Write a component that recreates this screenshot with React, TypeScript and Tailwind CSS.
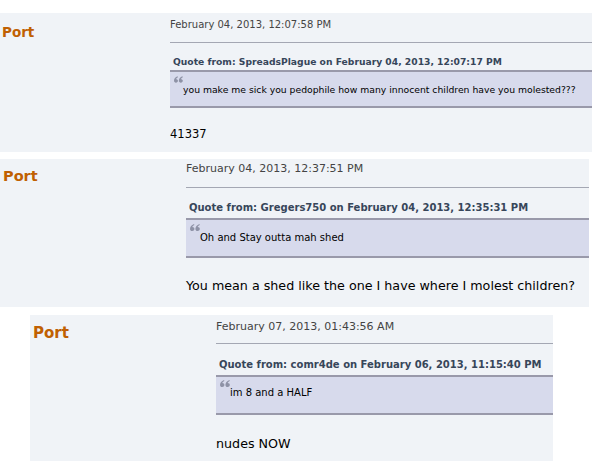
type PostClasses = {
  wrap: string;
  side: string;
  name: string;
  head: string;
  qhead: string;
  qbox: string;
  qicon: string;
  qtext: string;
  body: string;
};

type Post = {
  date: string;
  quoteAuthor: string;
  quoteDate: string;
  quote: string;
  body: string;
  c: PostClasses;
};

const posts: Post[] = [
  {
    date: 'February 04, 2013, 12:07:58 PM',
    quoteAuthor: 'SpreadsPlague',
    quoteDate: 'February 04, 2013, 12:07:17 PM',
    quote: 'you make me sick you pedophile how many innocent children have you molested???',
    body: '41337',
    c: {
      wrap: 'mt-[13px] w-[592px]',
      side: 'w-[170px] pl-[2px] pt-[7px]',
      name: 'text-[13.5px] leading-[16px]',
      head: 'pt-[6px] pb-[11px] text-[10px] leading-[12px]',
      qhead: 'mt-[13px] mb-[3px] pl-[3px] text-[9.2px] leading-[11px]',
      qbox: 'pt-[4px] pb-[11px]',
      qicon: 'ml-[4px] w-[9px] h-[7px]',
      qtext: 'mt-[1px] pl-[13px] text-[9.25px] leading-[11px]',
      body: 'mt-[19px] mb-[11px] text-[11.5px] leading-[14px]',
    },
  },
  {
    date: 'February 04, 2013, 12:37:51 PM',
    quoteAuthor: 'Gregers750',
    quoteDate: 'February 04, 2013, 12:35:31 PM',
    quote: 'Oh and Stay outta mah shed',
    body: 'You mean a shed like the one I have where I molest children?',
    c: {
      wrap: 'mt-[7px] w-[589px]',
      side: 'w-[186px] pl-[3px] pt-[5px]',
      name: 'text-[14.5px] leading-[17px]',
      head: 'pt-[3px] pb-[12px] text-[11px] leading-[13px]',
      qhead: 'mt-[14px] mb-[4px] pl-[3px] text-[10px] leading-[12px]',
      qbox: 'pt-[4px] pb-[12px]',
      qicon: 'ml-[4px] w-[10px] h-[7px]',
      qtext: 'mt-[1px] pl-[14px] text-[10px] leading-[12px]',
      body: 'mt-[20px] mb-[14px] text-[12.7px] leading-[15px]',
    },
  },
  {
    date: 'February 07, 2013, 01:43:56 AM',
    quoteAuthor: 'comr4de',
    quoteDate: 'February 06, 2013, 11:15:40 PM',
    quote: 'im 8 and a HALF',
    body: 'nudes NOW',
    c: {
      wrap: 'mt-[8px] ml-[30px] w-[523px]',
      side: 'w-[186px] pl-[3px] pt-[6px]',
      name: 'text-[15px] leading-[17px]',
      head: 'pt-[5px] pb-[10px] text-[11px] leading-[13px]',
      qhead: 'mt-[15px] mb-[4px] pl-[3px] text-[10px] leading-[12px]',
      qbox: 'pt-[3px] pb-[14px]',
      qicon: 'ml-[4px] w-[10px] h-[7px]',
      qtext: 'pl-[14px] text-[10px] leading-[12px]',
      body: 'mt-[21px] mb-[10px] text-[12.7px] leading-[15px]',
    },
  },
];

function QuoteMark({ className }: { className: string }) {
  // the little grey double quote in the corner of the quote box
  return (
    <svg viewBox="0 0 10 7" className={`block ${className}`} fill="#8e92a6">
      <path d="M2.2 7C0.9 7 0 6.1 0 4.9C0 2.8 1.5 1 4 0L4.4 0.9C3.1 1.5 2.4 2.3 2.3 3.1C3.6 3.1 4.4 3.8 4.4 5C4.4 6.2 3.4 7 2.2 7Z" />
      <path d="M7.6 7C6.3 7 5.4 6.1 5.4 4.9C5.4 2.8 6.9 1 9.4 0L9.8 0.9C8.5 1.5 7.8 2.3 7.7 3.1C9 3.1 9.8 3.8 9.8 5C9.8 6.2 8.8 7 7.6 7Z" />
    </svg>
  );
}

function PostBox({ post }: { post: Post }) {
  const c = post.c;
  return (
    <div className={`flex items-start bg-[#f0f3f7] ${c.wrap}`}>
      <div className={`shrink-0 ${c.side}`}>
        <span className={`font-bold text-[#c06002] ${c.name}`}>Port</span>
      </div>
      <div className="flex-1 min-w-0">
        <div className={`text-[#444] border-b border-[#a4a7b3] ${c.head}`}>{post.date}</div>
        <div className={`font-bold text-[#37465a] ${c.qhead}`}>
          Quote from: {post.quoteAuthor} on {post.quoteDate}
        </div>
        <div className={`bg-[#d7daec] border-y-2 border-[#9999aa] ${c.qbox}`}>
          <QuoteMark className={c.qicon} />
          <div className={`text-black ${c.qtext}`}>{post.quote}</div>
        </div>
        <div className={`text-black ${c.body}`}>{post.body}</div>
      </div>
    </div>
  );
}

export default function App() {
  return (
    <div className="w-[608px] h-[469px] overflow-hidden bg-white flex flex-col items-start font-['DejaVu_Sans',Verdana,sans-serif]">
      {posts.map((p) => (
        <PostBox key={p.date} post={p} />
      ))}
    </div>
  );
}
